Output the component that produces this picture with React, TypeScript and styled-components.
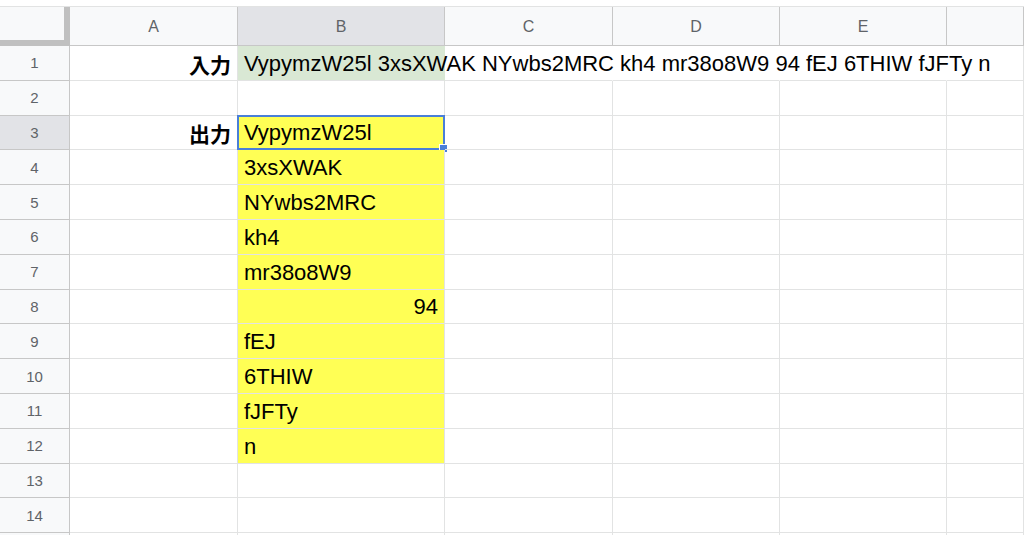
import styled, { createGlobalStyle } from 'styled-components';

const GlobalStyle = createGlobalStyle`
  body {
    margin: 0;
    background: #fff;
    font-family: "Liberation Sans", Arial, "Noto Sans CJK JP", sans-serif;
    overflow: hidden;
  }
`;

const COLS = ['A', 'B', 'C', 'D', 'E', 'F'];
const INPUT = 'VypymzW25l 3xsXWAK NYwbs2MRC kh4 mr38o8W9 94 fEJ 6THIW fJFTy n';
const OUTPUT = ['VypymzW25l', '3xsXWAK', 'NYwbs2MRC', 'kh4', 'mr38o8W9', '94', 'fEJ', '6THIW', 'fJFTy', 'n'];

type Fill = 'none' | 'green' | 'yellow';

export default function App() {
  const rows = Array.from({ length: 15 }, (_, i) => i + 1);

  function renderCell(row: number, colIdx: number) {
    const key = `${row}-${colIdx}`;
    const col = COLS[colIdx];
    if (row === 1) {
      if (col === 'A') return <Cell key={key} $align="right"><Label>入力</Label></Cell>;
      if (col === 'B')
        return (
          <Cell key={key} $fill="green" $noRight>
            <Overflow>{INPUT}</Overflow>
          </Cell>
        );
      return <Cell key={key} $noRight={col !== 'F'} />;
    }
    if (row === 3 && col === 'A') return <Cell key={key} $align="right"><Label>出力</Label></Cell>;
    if (col === 'B' && row >= 3 && row <= 12) {
      const value = OUTPUT[row - 3];
      const isNumber = /^\d+$/.test(value);
      return (
        <Cell key={key} $fill="yellow" $align={isNumber ? 'right' : 'left'}>
          {value}
          {row === 3 && (
            <Selection>
              <Handle />
            </Selection>
          )}
        </Cell>
      );
    }
    return <Cell key={key} />;
  }

  return (
    <Page>
      <GlobalStyle />
      <TopStrip />
      <Sheet>
        <Corner />
        {COLS.map((c) => (
          <ColHeader key={c} $selected={c === 'B'}>
            {c !== 'F' ? c : ''}
          </ColHeader>
        ))}
        {rows.map((r) => (
          <Row key={r}>
            <RowHeader $selected={r === 3}>{r <= 14 ? r : ''}</RowHeader>
            {COLS.map((_, ci) => renderCell(r, ci))}
          </Row>
        ))}
      </Sheet>
    </Page>
  );
}

const Page = styled.div`
  height: 100vh;
  overflow: hidden;
`;

const TopStrip = styled.div`
  height: 7px;
  box-sizing: border-box;
  border-bottom: 1px solid #e2e3e3;
  background: #fff;
`;

const Sheet = styled.div`
  display: grid;
  grid-template-columns: 70px 168px 207px 168px 167px 167px 1fr;
  grid-template-rows: 39px repeat(15, 34.8px);
`;

const Row = styled.div`
  display: contents;
`;

const Corner = styled.div`
  background: #f8f9fa;
  box-sizing: border-box;
  border-right: 6px solid #c0c0c0;
  border-bottom: 6px solid #c0c0c0;
`;

const ColHeader = styled.div<{ $selected?: boolean }>`
  background: ${(p) => (p.$selected ? '#e2e3e7' : '#f8f9fa')};
  box-sizing: border-box;
  border-right: 1px solid #c7c7c7;
  border-bottom: 1px solid #c7c7c7;
  display: flex;
  align-items: center;
  justify-content: center;
  color: #5f6368;
  font-size: 16px;
  padding-top: 1px;
`;

const RowHeader = styled.div<{ $selected?: boolean }>`
  background: ${(p) => (p.$selected ? '#e2e3e7' : '#f8f9fa')};
  box-sizing: border-box;
  border-right: 1px solid #c7c7c7;
  border-bottom: 1px solid #c7c7c7;
  display: flex;
  align-items: center;
  justify-content: center;
  color: #5f6368;
  font-size: 15px;
`;

const fills: Record<Fill, string> = {
  none: 'transparent',
  green: '#d9e8d4',
  yellow: '#ffff55',
};

const Cell = styled.div<{ $fill?: Fill; $align?: 'left' | 'right'; $noRight?: boolean }>`
  position: relative;
  box-sizing: border-box;
  background: ${(p) => fills[p.$fill ?? 'none']};
  border-right: 1px solid ${(p) => (p.$noRight ? 'transparent' : '#e2e3e3')};
  border-bottom: 1px solid #e2e3e3;
  display: flex;
  align-items: center;
  justify-content: ${(p) => (p.$align === 'right' ? 'flex-end' : 'flex-start')};
  padding: 2px 6px 0 6px;
  font-size: 22px;
  color: #000;
  white-space: nowrap;
  overflow: visible;
`;

const Label = styled.span`
  font-weight: bold;
  font-size: 21px;
  font-family: "Noto Sans CJK JP", "Liberation Sans", sans-serif;
`;

const Overflow = styled.span`
  position: relative;
  z-index: 1;
`;

const Selection = styled.div`
  position: absolute;
  inset: -1px -1px -1px -1px;
  border: 2px solid #4a7fd8;
  pointer-events: none;
`;

const Handle = styled.div`
  position: absolute;
  right: -5px;
  bottom: -5px;
  width: 7px;
  height: 7px;
  background: #4a7fd8;
  border: 1px solid #fff;
`;
